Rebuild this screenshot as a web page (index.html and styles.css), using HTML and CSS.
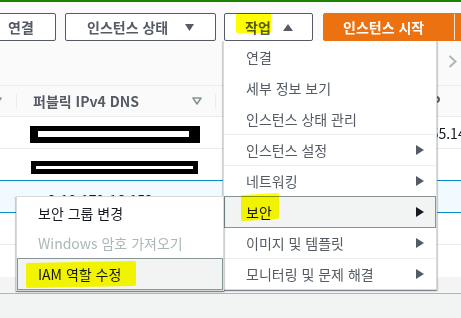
FILE: index.html
```html
<!DOCTYPE html>
<html lang="ko">
<head>
<meta charset="utf-8">
<link rel="stylesheet" href="styles.css">
</head>
<body>
<div class="topbar"></div>
<div class="toolbar">
  <div class="actions">
    <div class="btn btn-connect">연결</div>
    <div class="btn btn-state">인스턴스 상태<svg class="caret" width="9" height="7" viewBox="0 0 9 7"><polygon points="0,0 9,0 4.5,7"/></svg></div>
    <div class="btn btn-actions"><span class="hl hl-act">작업</span><svg class="caret caret-up" width="10" height="7" viewBox="0 0 10 7"><polygon points="0,7 10,7 5,0"/></svg></div>
    <div class="btn-primary"><span class="main">인스턴스 시작</span><span class="split"></span></div>
  </div>
  <div class="pager">
    <svg width="9" height="13" viewBox="0 0 9 13"><polyline points="1.5,1 7.5,6.5 1.5,12" fill="none" stroke="#aab7b8" stroke-width="2"/></svg>
  </div>
</div>
<div class="table">
  <div class="tr thead">
    <div class="th c0"><svg class="filter filter-cut" width="10" height="8" viewBox="0 0 10 8"><polygon points="1,1 9,1 5,7" fill="none" stroke="#879596" stroke-width="1.6" stroke-linejoin="round"/></svg></div>
    <div class="th c1"><span>퍼블릭 IPv4 DNS</span><svg class="filter" width="10" height="8" viewBox="0 0 10 8"><polygon points="1,1 9,1 5,7" fill="none" stroke="#879596" stroke-width="1.6" stroke-linejoin="round"/></svg></div>
    <div class="th c2">인스턴스 상태</div>
    <div class="th c3">탄력적 IP</div>
  </div>
  <div class="tr">
    <div class="td c0"></div>
    <div class="td c1 redact-cell"><div class="redact r1"><i></i></div></div>
    <div class="td c2">실행 중</div>
    <div class="td c3">13.112.55.141</div>
  </div>
  <div class="tr pre-sel">
    <div class="td c0"></div>
    <div class="td c1 redact-cell"><div class="redact r2"><i></i></div></div>
    <div class="td c2">실행 중</div>
    <div class="td c3"></div>
  </div>
  <div class="tr sel">
    <div class="td c0"></div>
    <div class="td c1 dns">ec2-18-179-16-153.ap-northeast-1.compute.amazonaws.com</div>
    <div class="td c2">실행 중</div>
    <div class="td c3"></div>
  </div>
  <div class="tr">
    <div class="td c0"></div>
    <div class="td c1"></div>
    <div class="td c2"></div>
    <div class="td c3"></div>
  </div>
  <div class="tr last">
    <div class="td c0"></div>
    <div class="td c1"></div>
    <div class="td c2"></div>
    <div class="td c3"></div>
  </div>
</div>
<div class="hscroll"></div>

<div class="menu">
  <div class="mi">연결</div>
  <div class="mi">세부 정보 보기</div>
  <div class="mi">인스턴스 상태 관리</div>
  <div class="mi cat">인스턴스 설정<svg class="arrow" width="8" height="10" viewBox="0 0 8 10"><polygon points="0,0 8,5 0,10"/></svg></div>
  <div class="mi cat">네트워킹<svg class="arrow" width="8" height="10" viewBox="0 0 8 10"><polygon points="0,0 8,5 0,10"/></svg></div>
  <div class="mi cat active"><span class="hl hl-sec">보안</span><svg class="arrow" width="8" height="10" viewBox="0 0 8 10"><polygon points="0,0 8,5 0,10"/></svg></div>
  <div class="mi cat after-active">이미지 및 템플릿<svg class="arrow" width="8" height="10" viewBox="0 0 8 10"><polygon points="0,0 8,5 0,10"/></svg></div>
  <div class="mi cat">모니터링 및 문제 해결<svg class="arrow" width="8" height="10" viewBox="0 0 8 10"><polygon points="0,0 8,5 0,10"/></svg></div>
</div>

<div class="submenu">
  <div class="si">보안 그룹 변경</div>
  <div class="si disabled">Windows 암호 가져오기</div>
  <div class="si active"><span class="hl hl-iam">IAM 역할 수정</span></div>
</div>
</body>
</html>
```

FILE: styles.css
```css
* {
  box-sizing: border-box;
}

body {
  margin: 0;
  width: 461px;
  height: 318px;
  overflow: hidden;
  position: relative;
  background: #f2f3f3;
  font-family: "Noto Sans CJK KR", "Noto Sans", sans-serif;
  font-size: 14px;
  color: #16191f;
}

.topbar {
  height: 2px;
  background: #1d8102;
}

.toolbar {
  height: 83px;
  background: #fafafa;
  padding-top: 11px;
}

.actions {
  display: flex;
  height: 28px;
  margin-left: -14px;
}

.btn {
  height: 28px;
  flex: none;
  display: flex;
  align-items: center;
  border: 1px solid #545b64;
  border-radius: 2px;
  background: #fff;
  color: #545b64;
  font-weight: 700;
  line-height: 20px;
  white-space: nowrap;
}

.btn-connect {
  width: 70px;
  justify-content: center;
}

.btn-state {
  width: 151px;
  margin-left: 9px;
  padding-left: 21px;
}

.btn-state .caret {
  margin-left: 17px;
}

.btn-actions {
  width: 89px;
  margin-left: 8px;
  padding-left: 20px;
}

.btn-actions .caret {
  margin-left: 12px;
}

.caret {
  fill: #545b64;
  flex: none;
}

.btn-primary {
  margin-left: 10px;
  height: 28px;
  flex: none;
  display: flex;
  background: #ec7211;
  border: 1px solid #ec7211;
  border-radius: 2px;
  color: #fff;
  font-weight: 700;
  line-height: 26px;
  white-space: nowrap;
}

.btn-primary .main {
  width: 130px;
  padding-left: 19px;
}

.btn-primary .split {
  width: 40px;
  border-left: 1px solid #fbe3cf;
}

.pager {
  display: flex;
  justify-content: flex-end;
  padding-right: 4px;
  margin-top: 14px;
}

.pager svg {
  display: block;
}

/* table */
.table {
  background: #fff;
}

.tr {
  display: grid;
  grid-template-columns: 16px 199px 152px 220px;
  height: 32px;
  border-bottom: 1px solid #eaeded;
}

.thead {
  background: #fafafa;
  border-top: 1px solid #eaeded;
  height: 32px;
}

.th {
  display: flex;
  align-items: center;
  padding-left: 17px;
  font-weight: 700;
  color: #545b64;
  white-space: nowrap;
  overflow: hidden;
  background: linear-gradient(#eaeded, #eaeded) left center / 1px 14px no-repeat;
}

.th.c0 {
  padding-left: 0;
  background: none;
  overflow: visible;
}

.th.c1 {
  justify-content: space-between;
  padding-right: 13px;
}

.filter {
  flex: none;
  display: block;
}

.filter-cut {
  margin-left: -8px;
}

.td {
  display: flex;
  align-items: center;
  padding-left: 17px;
  white-space: nowrap;
  overflow: hidden;
  color: #16191f;
}

.td.c0 {
  padding-left: 0;
}

.td.dns {
  display: block;
  line-height: 38px;
  text-overflow: ellipsis;
  padding-right: 13px;
}

.pre-sel {
  border-bottom-color: #0e8fc4;
}

.sel {
  background: #f1faff;
  border-bottom-color: #0e8fc4;
}

.last {
  border-bottom: none;
}

.redact-cell {
  padding-left: 14px;
}

.redact {
  background: #000;
  flex: none;
}

.redact i {
  display: block;
  background: #fff;
}

.r1 {
  padding: 5px 11px 6px 8px;
  margin-top: 4px;
}

.r1 i {
  width: 151px;
  height: 6px;
}

.tr .redact.r2 {
  padding: 5px;
  margin-top: 6px;
  margin-left: 1px;
}

.r2 i {
  width: 157px;
  height: 3px;
}

.hscroll {
  height: 17px;
  background: #f4f4f4;
  border-bottom: 1px solid #aab7b8;
}

/* dropdown menu */
.menu {
  position: absolute;
  left: 223px;
  top: 41px;
  width: 214px;
  z-index: 2;
  background: #fff;
  border: 1px solid #d5dbdb;
  border-top: none;
  box-shadow: 0 1px 1px rgba(0, 28, 36, 0.3), 1px 1px 1px rgba(0, 28, 36, 0.15), -1px 1px 1px rgba(0, 28, 36, 0.15);
  color: #545b64;
}

.mi {
  height: 31px;
  display: flex;
  align-items: center;
  justify-content: space-between;
  padding: 0 11px 0 21px;
  border: 1px solid transparent;
  border-width: 0 1px;
  line-height: 20px;
  white-space: nowrap;
}

.mi.cat {
  border-top: 1px solid #eaeded;
}

.mi.active {
  height: 32px;
  border: 1px solid #879596;
  background: #f2f3f3;
  color: #16191f;
}

.mi.after-active {
  border-top: none;
  height: 30px;
}

.arrow {
  fill: #545b64;
  flex: none;
}

.mi.active .arrow {
  fill: #16191f;
}

.submenu {
  position: absolute;
  left: 16px;
  top: 196px;
  width: 208px;
  z-index: 3;
  background: #fff;
  border: 1px solid #d5dbdb;
  box-shadow: 0 1px 1px rgba(0, 28, 36, 0.3), 1px 1px 1px rgba(0, 28, 36, 0.15), -1px 1px 1px rgba(0, 28, 36, 0.15);
  color: #16191f;
}

.si {
  height: 31px;
  display: flex;
  align-items: center;
  padding-left: 20px;
  border: 1px solid transparent;
  border-width: 0 1px;
  line-height: 20px;
  white-space: nowrap;
}

.si.disabled {
  height: 30px;
  color: #aab7b8;
}

.si.active {
  height: 32px;
  border: 1px solid #879596;
  background: #f2f3f3;
}

/* marker highlights */
.hl {
  position: relative;
}

.hl::after {
  content: "";
  position: absolute;
  background: #ffff00;
  mix-blend-mode: multiply;
  border-radius: 2px;
}

.hl-act::after {
  left: -9px;
  right: 0;
  top: -4px;
  bottom: 4px;
}

.hl-sec::after {
  left: -5px;
  right: -7px;
  top: -8px;
  bottom: 2px;
  transform: skewY(-3deg);
}

.hl-iam::after {
  left: -12px;
  right: -15px;
  top: -2px;
  bottom: -3px;
  transform: skewY(-1deg);
}
```
